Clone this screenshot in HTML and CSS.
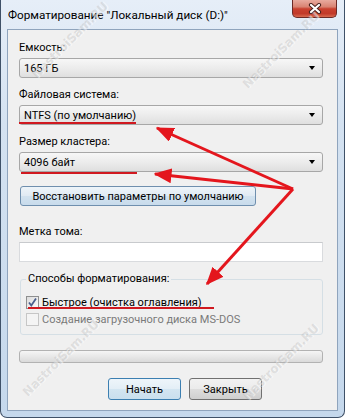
FILE: index.html
```html
<!DOCTYPE html>
<html>
<head>
  <meta charset="utf-8">
  <link rel="stylesheet" href="styles.css">
</head>
<body>
  <div class="window">
    <div class="titlebar">
      <span class="title">Форматирование "Локальный диск (D:)"</span>
      <div class="close-btn">
        <svg width="14" height="11" viewBox="0 0 14 11">
          <path d="M3 2 L11 9 M11 2 L3 9" stroke="#4a2420" stroke-width="4.2" stroke-linecap="round"/>
          <path d="M3 2 L11 9 M11 2 L3 9" stroke="#fff" stroke-width="2.2" stroke-linecap="round"/>
        </svg>
      </div>
    </div>

    <div class="client">
      <span class="lbl">Емкость:</span>
      <div class="combo"><span>165 ГБ</span><i class="combo-arrow"></i></div>

      <span class="lbl gap">Файловая система:</span>
      <div class="combo"><span>NTFS (по умолчанию)</span><i class="combo-arrow"></i></div>

      <span class="lbl gap">Размер кластера:</span>
      <div class="combo"><span>4096 байт</span><i class="combo-arrow"></i></div>

      <div class="btn btn-restore">Восстановить параметры по умолчанию</div>

      <span class="lbl gap-lg">Метка тома:</span>
      <div class="textbox"></div>

      <fieldset class="group">
        <legend>Способы форматирования:</legend>
        <div class="check-row">
          <span class="check checked">
            <svg width="11" height="11" viewBox="0 0 11 11">
              <path d="M2 5.5 L4.3 8.5 L9 1.5" fill="none" stroke="#4a5e8c" stroke-width="1.8"/>
            </svg>
          </span>
          <span>Быстрое (очистка оглавления)</span>
        </div>
        <div class="check-row disabled">
          <span class="check"></span>
          <span>Создание загрузочного диска MS-DOS</span>
        </div>
      </fieldset>

      <div class="progress"></div>

      <div class="actions">
        <div class="btn btn-default">Начать</div>
        <div class="btn">Закрыть</div>
      </div>
    </div>

    <span class="wm wm-1">NastroiSam.RU</span>
    <span class="wm wm-2">NastroiSam.RU</span>
    <span class="wm wm-3">NastroiSam.RU</span>
    <span class="wm wm-4">NastroiSam.RU</span>

    <!-- red marks drawn over the dialog -->
    <svg class="marks" width="345" height="418" viewBox="0 0 345 418">
      <defs>
        <marker id="head" viewBox="0 0 12 10" refX="11" refY="5" markerWidth="6" markerHeight="5" orient="auto" markerUnits="strokeWidth">
          <path d="M0 0 L12 5 L0 10 z" fill="#e4161d"/>
        </marker>
      </defs>
      <g stroke="#d01920" stroke-width="2">
        <path d="M19 123 H136"/>
        <path d="M21 173 H137"/>
        <path d="M28 308 H214"/>
      </g>
      <g stroke="#e4161d" stroke-width="3" fill="none" marker-end="url(#head)">
        <path d="M293 189 L157 128"/>
        <path d="M293 189 L155 174"/>
        <path d="M293 189 L207 284"/>
      </g>
    </svg>
  </div>
</body>
</html>
```

FILE: styles.css
```css
body {
  margin: 0;
  font-family: Roboto, "Noto Sans", sans-serif;
  font-size: 11px;
  color: #000;
  background: #fff;
}

/* window frame */
.window {
  position: relative;
  width: 345px;
  height: 418px;
  box-sizing: border-box;
  border: 1px solid #3f5168;
  border-top: 0;
  border-radius: 0 0 7px 7px;
  background: linear-gradient(#e6eef8, #d4e2f1 30%, #c5d8ec);
  display: flex;
  flex-direction: column;
  overflow: hidden;
}

.titlebar {
  height: 29px;
  display: flex;
  justify-content: space-between;
  align-items: flex-start;
  padding: 0 7px;
}

.title {
  padding-top: 7px;
  line-height: 16px;
  font-size: 11.7px;
  white-space: nowrap;
}

.close-btn {
  width: 45px;
  height: 18px;
  box-sizing: border-box;
  border: 1px solid #6b2a26;
  border-top: 0;
  border-radius: 0 0 5px 5px;
  background: linear-gradient(#e8aa9e, #d98473 40%, #c9412f 52%, #c23a2a 80%, #d86b50);
  display: flex;
  align-items: center;
  justify-content: center;
}

/* client area */
.client {
  flex: 1;
  margin: 0 6px 6px;
  border: 1px solid #8fa4bd;
  background: #f0f0f0;
  padding: 10px 14px 0 11px;
}

.lbl {
  display: block;
  height: 16px;
  line-height: 16px;
  margin-bottom: 2px;
}

.lbl.gap {
  margin-top: 9px;
}

.lbl.gap-lg {
  margin-top: 18px;
}

.combo {
  height: 20px;
  box-sizing: border-box;
  border: 1px solid #a7a7a7;
  border-radius: 3px;
  background: linear-gradient(#f7f7f7, #ececec 50%, #dfdfdf);
  display: flex;
  align-items: center;
  justify-content: space-between;
  padding: 0 7px 0 4px;
}

.combo-arrow {
  width: 0;
  height: 0;
  border-left: 3.5px solid transparent;
  border-right: 3.5px solid transparent;
  border-top: 4px solid #000;
}

.btn {
  height: 22px;
  width: 73px;
  box-sizing: border-box;
  border: 1px solid #707070;
  border-radius: 3px;
  background: linear-gradient(#f2f2f2, #ebebeb 50%, #dddddd 51%, #cfcfcf);
  display: flex;
  align-items: center;
  justify-content: center;
  white-space: nowrap;
}

.btn-restore {
  width: 236px;
  height: 20px;
  margin: 14px 0 0 1px;
  border-color: #6f8fae;
  background: linear-gradient(#eef4f9, #e0eaf3 50%, #d2e2ef 51%, #c8dbeb);
}

.btn-default {
  border-color: #3c7fb1;
  background: linear-gradient(#eef5fa, #e3eef6 50%, #d3e5f1 51%, #c9dfee);
}

.textbox {
  height: 20px;
  box-sizing: border-box;
  border: 1px solid #d9dbde;
  border-top-color: #c8cacd;
  background: #fff;
}

.group {
  margin: 9px 0 0 1px;
  padding: 7px 5px 6px;
  border: 1px solid #d5dfe5;
  border-radius: 3px;
}

.group legend {
  padding: 0 2px;
  line-height: 16px;
}

.check-row {
  height: 17px;
  display: flex;
  align-items: center;
}

.check {
  width: 13px;
  height: 13px;
  box-sizing: border-box;
  border: 1px solid #8e8f8f;
  background: linear-gradient(135deg, #dcdcdc, #fafafa);
  margin-right: 3px;
  display: flex;
  align-items: center;
  justify-content: center;
}

.check-row.disabled {
  color: #7a7a7a;
}

.check-row.disabled .check {
  border-color: #c6c6c6;
  background: #f4f4f4;
}

.progress {
  height: 13px;
  margin-top: 15px;
  box-sizing: border-box;
  border: 1px solid #b2b2b2;
  border-radius: 3px;
  background: linear-gradient(#f5f5f5, #e8e8e8 50%, #dadada);
}

.actions {
  display: flex;
  gap: 8px;
  margin: 15px 0 0 89px;
}

/* site watermarks */
.wm {
  position: absolute;
  font: bold 12px "DejaVu Sans", sans-serif;
  line-height: 14px;
  color: rgba(170, 170, 170, 0.3);
  text-shadow: 1px 1px 0 rgba(255, 255, 255, 0.5);
  transform: rotate(-45deg);
  white-space: nowrap;
}

.wm-1 { left: 18px; top: 33px; }
.wm-2 { left: 229px; top: 43px; }
.wm-3 { left: 9px; top: 351px; }
.wm-4 { left: 229px; top: 355px; }

.marks {
  position: absolute;
  left: -1px;
  top: 0;
}
```
